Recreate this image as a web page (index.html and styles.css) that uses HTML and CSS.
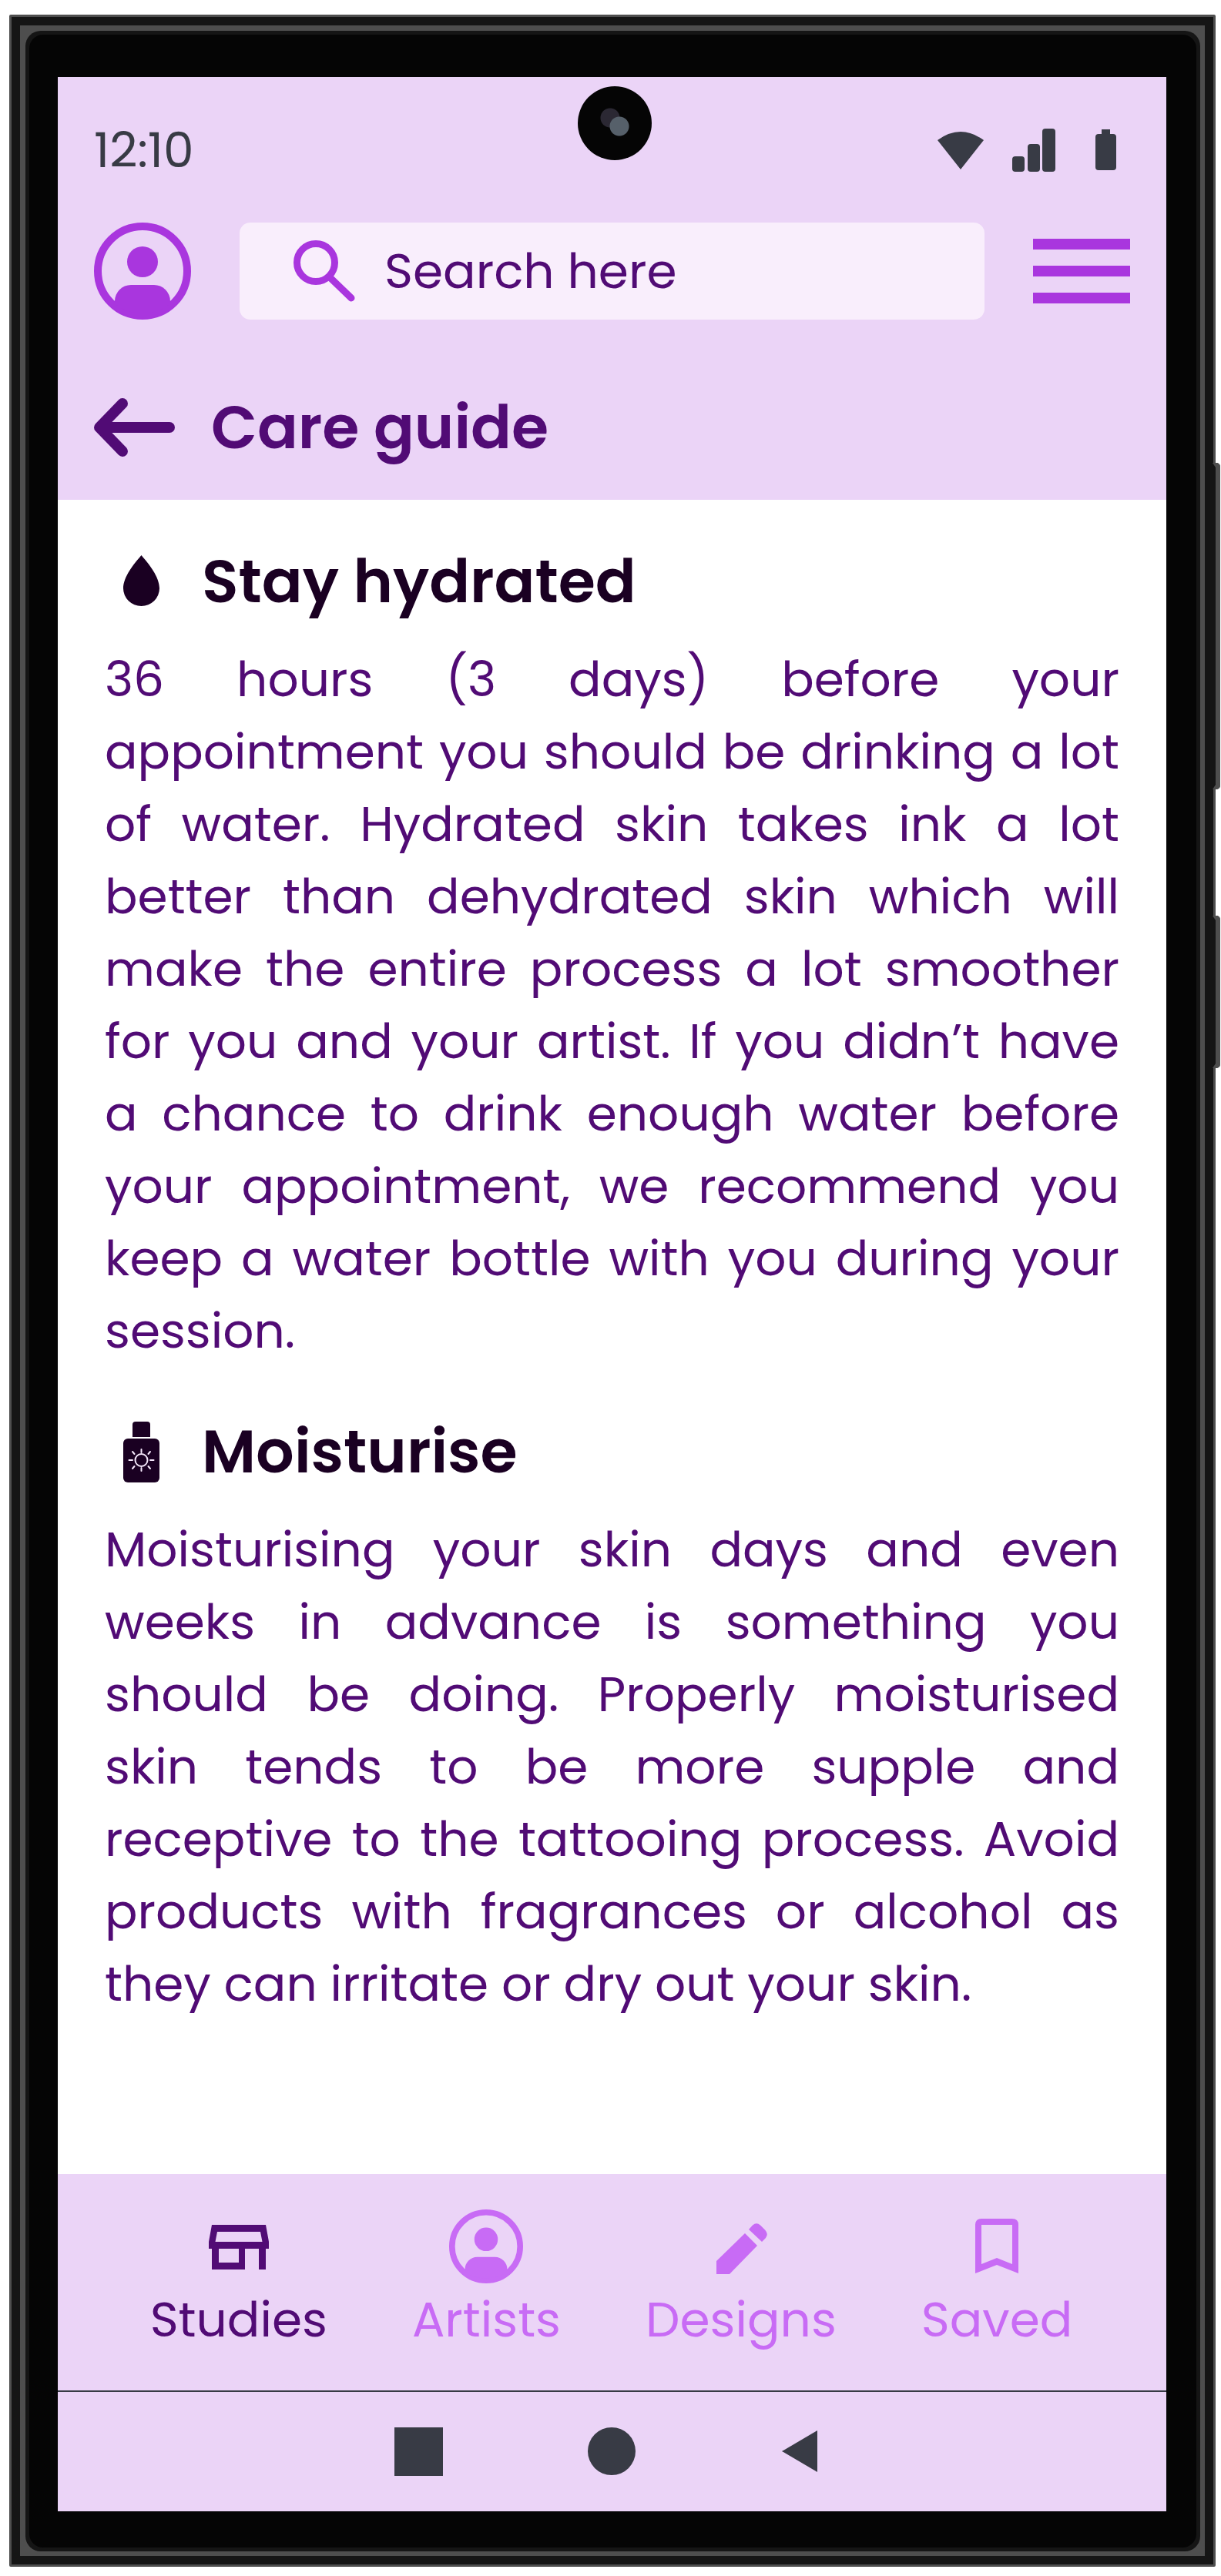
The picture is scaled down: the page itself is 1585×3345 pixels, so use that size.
FILE: index.html
```html
<!DOCTYPE html>
<html lang="en">
<head>
<meta charset="utf-8">
<meta name="viewport" content="width=device-width, initial-scale=1">
<title>Care guide</title>
<link rel="stylesheet" href="styles.css">
</head>
<body>
<svg class="symbols" aria-hidden="true">
  <symbol id="person" viewBox="0 0 126 126">
    <circle cx="63" cy="63" r="58" fill="none" stroke="currentColor" stroke-width="10"/>
    <circle cx="63" cy="51" r="20" fill="currentColor"/>
    <path d="M27 106V102A21 21 0 0 1 48 81H78A21 21 0 0 1 99 102V106A60 60 0 0 1 27 106Z" fill="currentColor"/>
  </symbol>
</svg>
<div class="phone">
  <span class="side-key volume"></span>
  <span class="side-key power"></span>
  <div class="bezel"><div class="rim"><div class="glass">
    <div class="screen">
      <span class="camera"></span>
      <header class="header">
        <div class="status">
          <time class="clock">12:10</time>
          <svg class="status-icons" width="232" height="56" viewBox="0 0 232 56" fill="currentColor" aria-hidden="true">
            <path d="M0 15Q30 -7 60 15L30 53Z"/>
            <rect x="97" y="36" width="16" height="20" rx="4"/>
            <rect x="117" y="20" width="16" height="36" rx="4"/>
            <rect x="136" y="0" width="17" height="56" rx="4"/>
            <rect x="213" y="1" width="11" height="10"/>
            <rect x="205" y="7" width="27" height="47" rx="4"/>
          </svg>
        </div>
        <div class="toolbar">
          <button class="icon-button" type="button" aria-label="Profile"><svg width="126" height="126"><use href="#person"/></svg></button>
          <label class="search">
            <svg width="80" height="80" viewBox="0 0 80 80" fill="none" stroke="currentColor" stroke-width="9" aria-hidden="true">
              <circle cx="29" cy="29" r="24.500"/>
              <path d="M47 48L75 75" stroke-linecap="round"/>
            </svg>
            <input type="search" placeholder="Search here" aria-label="Search">
          </label>
          <button class="icon-button" type="button" aria-label="Menu">
            <svg width="126" height="84" viewBox="0 0 126 84" fill="currentColor"><path d="M0 0H126V14H0ZM0 35H126V49H0ZM0 70H126V84H0Z"/></svg>
          </button>
        </div>
        <div class="title-row">
          <a class="back" href="#" aria-label="Back">
            <svg width="105" height="76" viewBox="0 0 105 76" fill="none" stroke="currentColor" stroke-width="14" stroke-linecap="round" stroke-linejoin="round"><path d="M37 7L7 38L37 69M9 38H98"/></svg>
          </a>
          <h1>Care guide</h1>
        </div>
      </header>
      <main class="content">
        <section>
          <h2>
            <svg width="80" height="80" viewBox="0 0 80 80" fill="currentColor" aria-hidden="true"><path d="M39.500 6C49 17 63 34 63 49A23.500 23 0 0 1 16 49C16 34 30 17 39.500 6Z"/></svg>
            Stay hydrated
          </h2>
          <p>36 hours (3 days) before your appointment you should be drinking a lot of water. Hydrated skin takes ink a lot better than dehydrated skin which will make the entire process a lot smoother for you and your artist. If you didn’t have a chance to drink enough water before your appointment, we recommend you keep a water bottle with you during your session.</p>
        </section>
        <section>
          <h2>
            <svg width="80" height="80" viewBox="0 0 80 80" aria-hidden="true">
              <path d="M28 21V5Q28 1 32 1H47Q51 1 51 5V21Z" fill="currentColor"/>
              <rect x="16" y="23" width="47" height="57" rx="6" fill="currentColor"/>
              <g fill="none" stroke="#f6e8fc" stroke-width="2" stroke-linecap="round">
                <circle cx="39.500" cy="51" r="8"/>
                <path d="M39.500 37V41M39.500 61V65M23.500 51H28M51 51H55.500M28 40L30.500 43M48.500 59L51 62M51 40L48.500 43M30.500 59L28 62"/>
              </g>
            </svg>
            Moisturise
          </h2>
          <p>Moisturising your skin days and even weeks in advance is something you should be doing. Properly moisturised skin tends to be more supple and receptive to the tattooing process. Avoid products with fragrances or alcohol as they can irritate or dry out your skin.</p>
        </section>
      </main>
      <nav class="tabs" aria-label="Main">
        <a class="tab active" href="#" aria-current="page">
          <svg width="96" height="96" viewBox="0 0 96 96" aria-hidden="true"><path fill="currentColor" fill-rule="evenodd" d="M13 20H83L87 42V51H83V78H74V51H56V78H13V51H9V42ZM20 29L17.500 42H78.500L76 29ZM22 51V69H48V51Z"/></svg>
          Studies
        </a>
        <a class="tab" href="#">
          <svg width="96" height="96" aria-hidden="true"><use href="#person"/></svg>
          Artists
        </a>
        <a class="tab" href="#">
          <svg width="96" height="96" viewBox="0 0 96 96" fill="currentColor" aria-hidden="true"><path d="M16 84V67L53 31L69 47L33 84ZM58 26L63 20.500Q68 16 73 20.500L79 26.500Q84 32 80 37L75 42Z"/></svg>
          Designs
        </a>
        <a class="tab" href="#">
          <svg width="96" height="96" viewBox="0 0 96 96" aria-hidden="true"><path fill="currentColor" fill-rule="evenodd" d="M28 12H68Q76 12 76 20V83L48 72L20 83V20Q20 12 28 12ZM28 20V71L48 63L68 71V20Z"/></svg>
          Saved
        </a>
      </nav>
      <div class="system-nav">
        <button type="button" aria-label="Recent apps"><svg width="63" height="63"><rect width="63" height="63"/></svg></button>
        <button type="button" aria-label="Home"><svg width="63" height="63"><circle cx="31" cy="31" r="31"/></svg></button>
        <button type="button" aria-label="Go back"><svg width="63" height="63"><path d="M1 31L47 4V58Z"/></svg></button>
      </div>
    </div>
  </div></div></div>
</div>
</body>
</html>
```
FILE: styles.css
```css
:root {
  --lilac: #ebd4f7;
  --field: #f9eefc;
  --accent: #a936de;
  --accent-light: #c86bf5;
  --purple: #510b75;
  --ink: #1a0022;
  --slate: #383b45;
  --metal: #4e4e4e;
  --shell: #151515;
}

* { box-sizing: border-box; }

body {
  margin: 0;
  padding: 19px 7px 12px 12px;
  background: #fff;
  color: var(--purple);
  font-family: Poppins, Inter, "Open Sans", sans-serif;
  font-size: 63px;
  line-height: 94px;
}

svg { display: block; flex: none; }
.symbols { position: absolute; width: 0; height: 0; }

button {
  display: block;
  margin: 0;
  padding: 0;
  border: 0;
  background: none;
  color: inherit;
}

a { color: inherit; text-decoration: none; }

h1, h2, p { margin: 0; }

h1, h2 {
  font-size: 78px;
  font-weight: 600;
  line-height: 96px;
}

/* Device shell */
.phone {
  position: relative;
  padding: 11px;
  border: 3px solid var(--metal);
  border-radius: 2px;
  background: var(--shell);
}

.bezel { padding: 7px 6px 6px 7px; background: var(--metal); }
.rim { padding: 5px; border-radius: 20px; background: var(--shell); }
.glass { padding: 55px 39px 47px 37px; border-radius: 18px; background: #050505; }

.side-key {
  position: absolute;
  right: -9px;
  width: 10px;
  border: 6px solid var(--metal);
  border-left: 4px solid var(--shell);
  border-radius: 0 5px 5px 0;
  background: var(--shell);
}
.volume { top: 579px; height: 424px; }
.power { top: 1167px; height: 198px; }

.screen { position: relative; background: #fff; }

.camera {
  position: absolute;
  top: 12px;
  left: 50%;
  width: 96px;
  height: 96px;
  margin-left: -45px;
  border-radius: 50%;
  background:
    radial-gradient(circle at 54px 52px, #56606a 12px, transparent 13px),
    radial-gradient(circle at 42px 41px, #2b2833 12px, transparent 13px),
    #050505;
}

/* Header */
.header { padding: 60px 47px 46px; background: var(--lilac); }

.status {
  display: flex;
  align-items: center;
  justify-content: space-between;
  height: 70px;
  padding-right: 18px;
  color: var(--slate);
}

.toolbar {
  display: flex;
  align-items: center;
  gap: 63px;
  margin-top: 59px;
  color: var(--accent);
}

.search {
  display: flex;
  flex: 1;
  align-items: center;
  gap: 38px;
  min-width: 0;
  height: 126px;
  padding: 0 40px 0 70px;
  border-radius: 14px;
  background: var(--field);
}

.search input {
  flex: 1;
  min-width: 0;
  height: 94px;
  padding: 0;
  border: 0;
  outline: 0;
  background: none;
  color: var(--purple);
  font: inherit;
}
.search input::placeholder { color: var(--purple); opacity: 1; }

.title-row {
  display: flex;
  align-items: center;
  gap: 47px;
  margin-top: 92px;
}

/* Article */
.content {
  display: grid;
  gap: 62px;
  padding: 58px 61px 200px;
}

h2 {
  display: flex;
  align-items: center;
  gap: 38px;
  margin-left: 8px;
  color: var(--ink);
}

.content p { margin-top: 32px; text-align: justify; }

/* Bottom navigation */
.tabs {
  display: flex;
  justify-content: center;
  gap: 110px;
  padding: 46px 2px 45px 0;
  border-bottom: 2px solid var(--slate);
  background: var(--lilac);
  color: var(--accent-light);
}

.tab { display: flex; flex-direction: column; align-items: center; }
.tab.active { color: var(--purple); }

.system-nav {
  display: flex;
  align-items: center;
  justify-content: center;
  gap: 188px;
  height: 155px;
  background: var(--lilac);
  color: var(--slate);
}
.system-nav svg { fill: currentColor; }
```
